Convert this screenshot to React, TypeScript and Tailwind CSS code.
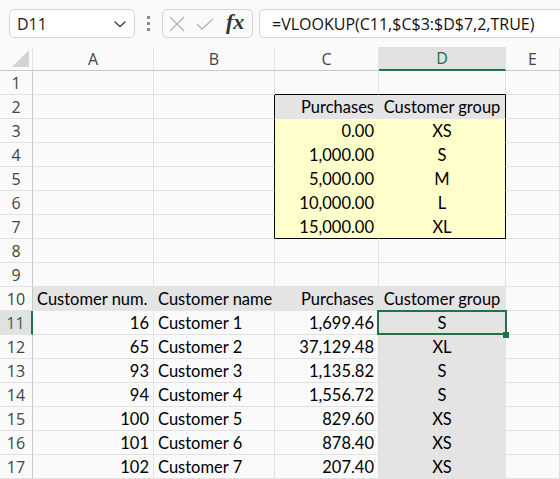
import React from "react";

type C = { t?: string; a?: "l" | "r" | "c"; cls: string; sel?: boolean };

const G = "border-[#e1e1e1] bg-[#fafafa]"; // plain cell
const GRAY = "bg-[#e4e4e4] border-[#e4e4e4]";
const YEL = "bg-[#ffffcc] border-[#ffffcc]";

const rows: C[][] = [];
const plain = (t?: string, a?: "l" | "r" | "c"): C => ({ t, a, cls: G });

// row 1
rows.push([plain(), plain(), { cls: "border-[#e1e1e1] border-b-black bg-[#fafafa]" }, { cls: "border-[#e1e1e1] border-b-black bg-[#fafafa]" }, plain()]);
// row 2
rows.push([
  plain(),
  { cls: "border-[#e1e1e1] border-r-black bg-[#fafafa]" },
  { t: "Purchases", a: "r", cls: GRAY },
  { t: "Customer group", a: "c", cls: "bg-[#e4e4e4] border-[#e4e4e4] border-r-black" },
  plain(),
]);
const lookup: [string, string][] = [
  ["0.00", "XS"],
  ["1,000.00", "S"],
  ["5,000.00", "M"],
  ["10,000.00", "L"],
  ["15,000.00", "XL"],
];
lookup.forEach(([p, g], i) => {
  const last = i === lookup.length - 1;
  rows.push([
    plain(),
    { cls: "border-[#e1e1e1] border-r-black bg-[#fafafa]" },
    { t: p, a: "r", cls: last ? "bg-[#ffffcc] border-[#ffffcc] border-b-black" : YEL },
    { t: g, a: "c", cls: last ? "bg-[#ffffcc] border-[#ffffcc] border-r-black border-b-black" : "bg-[#ffffcc] border-[#ffffcc] border-r-black" },
    plain(),
  ]);
});
rows.push([plain(), plain(), plain(), plain(), plain()]);
rows.push([plain(), plain(), plain(), plain(), plain()]);
rows.push([
  { t: "Customer num.", a: "l", cls: GRAY },
  { t: "Customer name", a: "l", cls: GRAY },
  { t: "Purchases", a: "r", cls: GRAY },
  { t: "Customer group", a: "c", cls: GRAY },
  plain(),
]);
const data: [string, string, string, string][] = [
  ["16", "Customer 1", "1,699.46", "S"],
  ["65", "Customer 2", "37,129.48", "XL"],
  ["93", "Customer 3", "1,135.82", "S"],
  ["94", "Customer 4", "1,556.72", "S"],
  ["100", "Customer 5", "829.60", "XS"],
  ["101", "Customer 6", "878.40", "XS"],
  ["102", "Customer 7", "207.40", "XS"],
];
data.forEach(([n, name, p, g], i) => {
  rows.push([
    plain(n, "r"),
    plain(name, "l"),
    plain(p, "r"),
    { t: g, a: "c", cls: GRAY, sel: i === 0 },
    plain(),
  ]);
});

const alignCls = { l: "justify-start", r: "justify-end", c: "justify-center" };

function Cell({ c }: { c: C }) {
  return (
    <div
      className={`relative flex items-center pt-[2px] px-[4px] border-r border-b whitespace-nowrap text-[16.5px] leading-none text-black font-['Lato',sans-serif] ${alignCls[c.a ?? "l"]} ${c.cls}`}
    >
      {c.t}
      {c.sel && (
        <>
          <div className="absolute z-10 -left-[2px] -top-[1px] -right-[2px] -bottom-[1px] border-2 border-[#217346]" />
          <div className="absolute z-10 -right-[4px] -bottom-[4px] w-[6px] h-[6px] bg-[#217346]" />
        </>
      )}
    </div>
  );
}

export default function App() {
  const cols = ["A", "B", "C", "D", "E"];
  return (
    <div className="w-[560px] h-[479px] overflow-hidden bg-[#fafafa] font-['Open_Sans',sans-serif]">
      {/* formula bar */}
      <div className="h-[47px] flex items-start pt-[9px] pl-[9px] gap-0">
        <div className="w-[126px] h-[29px] rounded-[5px] border border-[#d4d4d4] bg-white flex items-center pl-[7px] pr-[6px] justify-between">
          <span className="text-[16px] text-[#222] font-['Open_Sans',sans-serif]">D11</span>
          <svg width="14" height="8" viewBox="0 0 14 8" className="mr-[1px]">
            <path d="M1.5 1.5 L7 6.5 L12.5 1.5" fill="none" stroke="#444" strokeWidth="1.4" />
          </svg>
        </div>
        <div className="w-[27px] h-[29px] flex flex-col items-center justify-center gap-[3px]">
          <div className="w-[3px] h-[3px] bg-[#8a8a8a]" />
          <div className="w-[3px] h-[3px] bg-[#8a8a8a]" />
          <div className="w-[3px] h-[3px] bg-[#8a8a8a]" />
        </div>
        <div className="w-[91px] h-[29px] rounded-[5px] border border-[#d4d4d4] bg-[#fafafa] flex items-center">
          <svg width="16" height="16" viewBox="0 0 16 16" className="ml-[6px]">
            <path d="M1 1 L15 15 M15 1 L1 15" stroke="#b3b3b3" strokeWidth="1.3" fill="none" />
          </svg>
          <svg width="18" height="12" viewBox="0 0 18 12" className="ml-[11px]">
            <path d="M1 6 L6 11 L17 1" stroke="#b3b3b3" strokeWidth="1.3" fill="none" />
          </svg>
          <span className="ml-[12px] text-[22px] italic font-bold leading-none text-[#333] font-['Liberation_Serif',serif] pb-[3px]">fx</span>
        </div>
        <div className="ml-[6px] flex-1 h-[29px] rounded-l-[5px] border border-r-0 border-[#d4d4d4] bg-white flex items-center pl-[12px]">
          <span className="text-[16px] text-[#111] font-['Open_Sans',sans-serif] whitespace-nowrap">=VLOOKUP(C11,$C$3:$D$7,2,TRUE)</span>
        </div>
      </div>

      {/* sheet */}
      <div className="grid grid-cols-[33px_121px_121px_104px_127px_1fr] auto-rows-[24px]">
        {/* corner */}
        <div className="border-r border-b border-r-[#e1e1e1] border-b-[#c8c8c8] flex items-end justify-end pr-[3px] pb-[3px]">
          <svg width="17" height="17" viewBox="0 0 17 17">
            <path d="M17 0 L17 17 L0 17 Z" fill="#d4d4d4" />
          </svg>
        </div>
        {cols.map((c) =>
          c === "D" ? (
            <div key={c} className="flex items-center justify-center border-r border-r-[#e1e1e1] border-b-2 border-b-[#217346] bg-[#e1e1e1] text-[16px] text-[#1e6e42]">
              {c}
            </div>
          ) : (
            <div key={c} className="flex items-center justify-center border-r border-b border-r-[#e1e1e1] border-b-[#c8c8c8] text-[16px] text-[#444]">
              {c}
            </div>
          )
        )}
        {rows.map((r, i) => (
          <React.Fragment key={i}>
            {i === 10 ? (
              <div className="flex items-center justify-center border-r-2 border-b border-r-[#217346] border-b-[#e1e1e1] bg-[#e1e1e1] text-[16px] text-[#1e6e42]">
                {i + 1}
              </div>
            ) : (
              <div className="flex items-center justify-center border-r border-b border-r-[#c8c8c8] border-b-[#e1e1e1] text-[16px] text-[#444]">
                {i + 1}
              </div>
            )}
            {r.map((c, j) => (
              <Cell key={j} c={c} />
            ))}
          </React.Fragment>
        ))}
      </div>
    </div>
  );
}
